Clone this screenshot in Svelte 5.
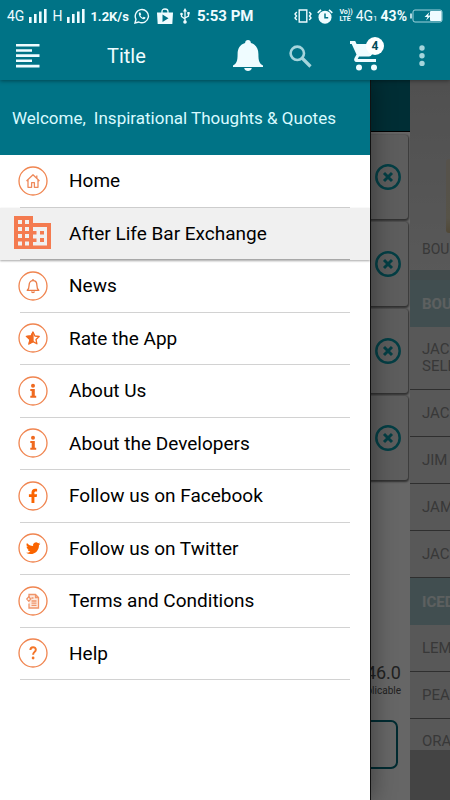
<script>
  const items = [
    { label: 'Home', icon: 'home' },
    { label: 'After Life Bar Exchange', icon: 'building' },
    { label: 'News', icon: 'bell' },
    { label: 'Rate the App', icon: 'star' },
    { label: 'About Us', icon: 'info' },
    { label: 'About the Developers', icon: 'info' },
    { label: 'Follow us on Facebook', icon: 'facebook' },
    { label: 'Follow us on Twitter', icon: 'twitter' },
    { label: 'Terms and Conditions', icon: 'terms' },
    { label: 'Help', icon: 'help' }
  ];

  const drinks = [
    { name: 'BOURBON', heading: true },
    { name: 'JACK SELECT', tall: true },
    { name: 'JACK' },
    { name: 'JIM' },
    { name: 'JAMESON' },
    { name: 'JACK' },
    { name: 'ICED TEA', heading: true },
    { name: 'LEMON' },
    { name: 'PEACH' },
    { name: 'ORANGE', last: true }
  ];

  const cartRows = [1, 2, 3, 4];

  let selected = $state('After Life Bar Exchange');
  let cartCount = $state(4);
</script>

{#snippet signal()}
  <svg width="18" height="14" viewBox="0 0 18 14" fill="currentColor">
    <rect x="0" y="8" width="2.6" height="6" />
    <rect x="5" y="5" width="2.6" height="9" />
    <rect x="10" y="2.5" width="2.6" height="11.5" />
    <rect x="15" y="0" width="2.6" height="14" />
  </svg>
{/snippet}

{#snippet rowIcon(name)}
  {#if name === 'building'}
    <svg width="38" height="34" viewBox="0 0 38 34">
      <path
        fill="#f47b50"
        fill-rule="evenodd"
        d="M0 0h19v7h18v26H0zM4 4v4h4V4zM11 4v4h4V4zM4 11v4h4v-4zM11 11v4h4v-4zM4 18v4h4v-4zM11 18v4h4v-4zM4 25.500v4h4v-4zM11 25.500v4h4v-4zM19 11v4h3.500v3.500H19v4h3.500V26H19v3.500h14V11zM26 15h4v3.500h-4zM26 22h4v4h-4z"
      />
    </svg>
  {:else}
    <svg width="30" height="30" viewBox="0 0 30 30" fill="none" stroke="#f26b21" stroke-width="1.3">
      <circle cx="15" cy="15" r="14" stroke="#f08550" />
      {#if name === 'home'}
        <path d="M8.500 15L15 8.800l6.500 6.200M10 14v7.300h3.600v-4.600h2.800v4.600H20V14M18.800 12V9.600" stroke="#ee8a5c" stroke-linejoin="round" />
      {:else if name === 'bell'}
        <path d="M9.200 19.300c1.800-1.200 1.900-2.500 1.900-5 0-3 1.700-4.700 3.900-4.700s3.900 1.700 3.900 4.700c0 2.500.1 3.800 1.900 5zM15 9.500V8M13.500 20.500c.4 1.300 2.600 1.300 3 0" stroke="#ea7a45" stroke-linejoin="round" />
      {:else if name === 'star'}
        <path d="M15 9l1.900 4 4.300.5-3.200 3 .9 4.300-3.900-2.200-3.900 2.200.9-4.300-3.200-3 4.300-.5z" stroke-linejoin="round" />
        <path d="M15 9v9.600l-3.900 2.200.9-4.300-3.200-3 4.300-.5z" fill="#f26b21" />
      {:else if name === 'info'}
        <g fill="#ef6a20" stroke="none">
          <circle cx="15" cy="9.800" r="2" />
          <path d="M12.300 13h4.500v6.800h1.400v2h-5.900v-2h1.400V15h-1.400z" />
        </g>
      {:else if name === 'facebook'}
        <path
          fill="#fa6400"
          stroke="none"
          d="M13.500 22v-6h-2.600v-2.700h2.600v-1.800c0-2.500 1.500-3.800 3.700-3.800.9 0 1.600.1 1.900.2v2.500h-1.300c-1.100 0-1.400.6-1.400 1.300v1.600h2.700l-.4 2.700h-2.300v6z"
        />
      {:else if name === 'twitter'}
        <path
          transform="translate(8 8) scale(.6)"
          fill="#fa6400"
          stroke="none"
          d="M23.950 4.570a10 10 0 0 1-2.820.77 4.960 4.960 0 0 0 2.160-2.720c-.95.55-2 .95-3.130 1.180a4.920 4.920 0 0 0-8.380 4.480C7.690 8.100 4.070 6.130 1.640 3.160a4.920 4.920 0 0 0 1.520 6.570 4.900 4.900 0 0 1-2.230-.61v.06c0 2.380 1.690 4.370 3.950 4.820a5 5 0 0 1-2.210.09 4.940 4.940 0 0 0 4.600 3.420A9.870 9.870 0 0 1 0 19.540a14 14 0 0 0 7.550 2.210c9.050 0 14-7.500 14-13.980l-.02-.64a9.900 9.900 0 0 0 2.420-2.560z"
        />
      {:else if name === 'terms'}
        <path d="M11 12V8.500h6.500l3 3v10.500H11v-4.500M17.500 8.500v3h3" stroke="#f0956a" fill="#fdeae0" />
        <path d="M13.500 12h2M13.500 15h5M13.500 17.200h5M13.500 19.400h5M8.800 13l2-2.300 2 2.300-2 2.300z" stroke="#f0956a" />
      {:else if name === 'help'}
        <path d="M12.400 12c0-3.800 5.400-3.700 5.400-.3 0 2.100-2.700 2.300-2.700 5" stroke-width="2" stroke="#f47528" />
        <circle cx="15.100" cy="20" r="1.400" fill="#f47528" stroke="none" />
      {/if}
    </svg>
  {/if}
{/snippet}

<div class="app">
  <header>
    <div class="status-bar">
      <div class="status-group">
        <span class="network">4G</span>
        {@render signal()}
        <span class="network">H</span>
        {@render signal()}
        <strong class="speed">1.2K/s</strong>
        <svg width="16" height="16" viewBox="0 0 16 16" fill="none" stroke="currentColor" stroke-width="1.4">
          <path d="M1 15l1-3.800A6.600 6.600 0 1 1 4.800 14z" />
          <path d="M5.200 4.500c-1.300 1.500.8 6 4.300 6.700 1.200.2 2.200-.8 2-1.600l-1.800-.8-.9 1C7.500 9.300 6.700 8.300 6.400 7.300l.8-.9-.8-1.900z" fill="currentColor" stroke="none" />
        </svg>
        <svg class="store" width="16" height="16" viewBox="0 0 16 16">
          <path d="M5 5V3.500Q5 1 8 1t3 2.500V5" fill="none" stroke="currentColor" stroke-width="1.3" />
          <path d="M0 4.500h16L15.300 16H.7z" fill="currentColor" />
          <path d="M5.500 6.500l6 3.700-6 3.800z" fill="#007386" />
        </svg>
        <svg class="usb" width="10" height="16" viewBox="0 0 10 16" fill="none" stroke="currentColor" stroke-width="1.3">
          <path d="M5 2.500v11M1.500 6v2.500L5 11M8.500 5.500V8L5 10" />
          <path d="M3 3.500L5 0l2 3.500z" fill="currentColor" stroke="none" />
          <circle cx="5" cy="14" r="1.800" fill="currentColor" stroke="none" />
          <circle cx="1.500" cy="6" r="1.300" fill="currentColor" stroke="none" />
          <path d="M7.300 4h2.400v2.400H7.300z" fill="currentColor" stroke="none" />
        </svg>
        <strong class="clock">5:53 PM</strong>
      </div>
      <div class="status-group right">
        <svg width="18" height="14" viewBox="0 0 18 14" fill="none" stroke="currentColor" stroke-width="1.4">
          <path d="M5.200 1h7.600v12H5.200zM2.800 3L1 5l1.500 2L1 9l1.800 2M15.200 3L17 5l-1.500 2L17 9l-1.800 2" />
        </svg>
        <svg class="alarm" width="16" height="15" viewBox="0 0 16 15">
          <circle cx="8" cy="8.200" r="6.500" fill="currentColor" />
          <path d="M.7 3.800L4 .8M15.300 3.800L12 .8" stroke="currentColor" stroke-width="1.6" />
          <path d="M8 4.500v4.300h3.200" fill="none" stroke="#007386" stroke-width="1.5" />
        </svg>
        <span class="volte"><b>Vo))</b><b>LTE</b></span>
        <span class="network">4G<small>1</small></span>
        <strong class="percent">43%</strong>
        <svg class="battery" width="33" height="14" viewBox="0 0 33 14">
          <path d="M1 4.500v5" stroke="currentColor" stroke-width="1.5" />
          <rect x="3" y="1" width="29" height="12" rx="2" fill="none" stroke="#9fd3dc" />
          <rect x="20" y="2" width="11.5" height="10" rx="1" fill="currentColor" />
          <path d="M19.500 3l-5 5h3l-1.500 3.500 5-5h-3z" fill="currentColor" />
        </svg>
      </div>
    </div>

    <div class="app-bar">
      <button class="menu" aria-label="Menu">
        <svg width="24" height="24" viewBox="0 0 24 24" fill="currentColor">
          <path d="M0 0h23.500v2.600H0zM0 5.300h16v2.400H0zM0 10.300h23.500v2.600H0zM0 15.500h16v2.400H0zM0 20.800h23.500v2.600H0z" />
        </svg>
      </button>
      <h1>Title</h1>
      <button class="alerts" aria-label="Notifications">
        <svg width="30" height="32" viewBox="0 0 30 32" fill="currentColor">
          <path d="M15 0c1.700 0 2.900 1.200 2.900 3 5.100 1.500 7.500 5.600 7.500 11 0 7.500 1.200 9.700 4.600 11.400V27H0v-1.600C3.400 23.700 4.600 21.500 4.600 14c0-5.400 2.400-9.500 7.500-11 0-1.800 1.200-3 2.900-3z" />
          <path d="M11.200 28h7.600c-.5 4-7.100 4-7.600 0z" />
        </svg>
      </button>
      <button class="search" aria-label="Search">
        <svg width="23" height="23" viewBox="0 0 23 23" fill="none" stroke="#a5d5dc">
          <circle cx="8.300" cy="8.300" r="6.700" stroke-width="2.6" />
          <path d="M13 13l8.500 8.500" stroke-width="3.2" />
        </svg>
      </button>
      <button class="cart" aria-label="Cart">
        <svg width="30" height="30" viewBox="0 0 30 30">
          <g fill="currentColor">
            <path d="M0 0h5.200l1.400 3H27l-5 10.500q-1 2-3 2H9l-1.300 2.600H26v3H6.500c-2 0-3-2-2-4l2-3.700L1.700 3H0z" />
            <circle cx="9" cy="26.500" r="3" />
            <circle cx="24" cy="26.500" r="3" />
          </g>
        </svg>
        <span class="badge">{cartCount}</span>
      </button>
      <button class="more" aria-label="More options">
        <svg width="6" height="22" viewBox="0 0 6 22" fill="#a5d5dc">
          <circle cx="3" cy="3" r="2.700" />
          <circle cx="3" cy="10.700" r="2.700" />
          <circle cx="3" cy="18.400" r="2.700" />
        </svg>
      </button>
    </div>
  </header>

  <main>
    <section class="order">
      <div class="order-head"></div>
      {#each cartRows as row (row)}
        <div class="order-card">
          <button aria-label="Remove item {row}">
            <svg width="26" height="26" viewBox="0 0 26 26" fill="none" stroke="#0a9cab">
              <circle cx="13" cy="13" r="11.700" stroke-width="2.500" />
              <path d="M9 9l8 8M17 9l-8 8" stroke-width="3" />
            </svg>
          </button>
        </div>
      {/each}
      <div class="total">
        <span class="amount">46.0</span>
        <span class="note">applicable</span>
      </div>
      <button class="checkout" aria-label="Checkout"></button>
    </section>

    <section class="catalog">
      <div class="photo">
        <span class="glass"></span>
        <span class="caption">BOURBON</span>
      </div>
      <ul>
        {#each drinks as drink}
          <li class:heading={drink.heading} class:tall={drink.tall} class:last={drink.last}>{drink.name}</li>
        {/each}
      </ul>
    </section>

    <div class="scrim"></div>

    <nav class="drawer">
      <p class="welcome"><span>Welcome,</span> <span>Inspirational Thoughts &amp; Quotes</span></p>
      <ul>
        {#each items as item (item.label)}
          <li class:selected={selected === item.label}>
            <button onclick={() => (selected = item.label)}>
              <span class="icon">{@render rowIcon(item.icon)}</span>
              {item.label}
            </button>
          </li>
        {/each}
      </ul>
    </nav>
  </main>
</div>

<style>
  :global(body) {
    margin: 0;
    background: #fff;
  }

  .app {
    display: flex;
    flex-direction: column;
    min-height: 100vh;
    overflow: hidden;
    font-family: Roboto, "Liberation Sans", sans-serif;
  }

  button {
    padding: 0;
    border: 0;
    background: none;
    color: inherit;
    font: inherit;
    cursor: pointer;
  }

  svg {
    display: block;
    flex: none;
  }

  ul {
    margin: 0;
    padding: 0;
    list-style: none;
  }

  header {
    position: relative;
    z-index: 2;
    background: #007386;
    color: #effcff;
    box-shadow: 0 1px 4px rgba(0, 0, 0, 0.4);
  }

  .status-bar {
    display: flex;
    justify-content: space-between;
    align-items: center;
    height: 32px;
    padding: 0 7px;
    white-space: nowrap;
  }

  .status-group {
    display: flex;
    align-items: center;
    gap: 5px;
  }

  .status-group.right {
    gap: 3px;
  }

  .network {
    font-size: 14px;
    font-weight: 400;
  }

  .network small {
    font-size: 8px;
  }

  .speed {
    font-size: 13px;
    font-weight: 700;
  }

  .store,
  .usb {
    margin-left: 2px;
  }

  .clock {
    margin-left: 2px;
    font-size: 15px;
    font-weight: 700;
  }

  .alarm {
    margin: 0 3px 0 2px;
  }

  .volte {
    display: flex;
    flex-direction: column;
    font-size: 7px;
    line-height: 7px;
  }

  .percent {
    font-size: 14px;
    font-weight: 700;
  }

  .app-bar {
    display: flex;
    align-items: center;
    height: 48px;
    padding: 0 25px 0 16px;
  }

  h1 {
    flex: 1;
    margin: 0 0 0 67px;
    font-size: 20px;
    font-weight: 400;
  }

  .alerts {
    margin-right: 26px;
  }

  .search {
    margin-right: 38px;
  }

  .cart {
    position: relative;
    margin-right: 39px;
  }

  .badge {
    position: absolute;
    top: -4px;
    right: -4px;
    width: 18px;
    height: 18px;
    border-radius: 50%;
    background: #fff;
    color: #004a58;
    font-size: 12px;
    font-weight: 700;
    line-height: 18px;
  }

  main {
    position: relative;
    display: flex;
    flex: 1;
  }

  .order {
    display: flex;
    flex: 1;
    flex-direction: column;
    align-items: stretch;
    background: #fff;
  }

  .order-head {
    height: 52px;
    margin-bottom: 3px;
    background: #007386;
    border-bottom: 1px solid #000;
    box-sizing: border-box;
  }

  .order-card {
    display: flex;
    justify-content: flex-end;
    align-items: center;
    height: 84px;
    margin: 0 2px 3px 8px;
    padding-right: 7px;
    border-radius: 3px;
    background: #e9e9e9;
    box-shadow: 0 1px 2px 1px #777;
    box-sizing: border-box;
  }

  .total {
    display: flex;
    flex-direction: column;
    align-items: flex-end;
    margin-top: 180px;
    padding-right: 9px;
    color: #555;
  }

  .amount {
    font-size: 18px;
    line-height: 20px;
  }

  .note {
    font-size: 10px;
    line-height: 16px;
  }

  .checkout {
    height: 49px;
    margin: 21px 12px 30px;
    border: 2px solid #006c7a;
    border-radius: 7px;
  }

  .catalog {
    display: flex;
    flex-direction: column;
    width: 40px;
    overflow: hidden;
    background: #aaa;
    color: #8c8c8c;
    font-size: 15px;
    white-space: nowrap;
  }

  .photo {
    display: flex;
    flex-direction: column;
    justify-content: flex-end;
    height: 200px;
    padding-left: 12px;
    border-bottom: 10px solid #a6bcbd;
    background: linear-gradient(#c8c8c8, #d8d8d8 75%, #dedede);
    box-sizing: border-box;
  }

  .glass {
    width: 12px;
    height: 74px;
    margin-left: 24px;
    border-radius: 3px;
    background: linear-gradient(#d6cdbc, #d9cfb4 80%, #c9b48a);
  }

  .caption {
    margin: 7px 0 12px;
    font-size: 14px;
    line-height: 18px;
  }

  .catalog li {
    display: flex;
    align-items: center;
    height: 47px;
    padding-left: 12px;
    border-bottom: 1px solid #777;
    background: #dcdcdc;
    box-sizing: border-box;
  }

  .catalog li.heading {
    border-bottom: 0;
    background: #a4c4c7;
    color: #e8f0f0;
    font-weight: 700;
  }

  .catalog li.tall {
    height: 63px;
    line-height: 17px;
    white-space: normal;
  }

  .catalog li.last {
    align-items: flex-end;
    height: 31px;
    border-bottom: 0;
  }

  .scrim {
    position: absolute;
    inset: 0;
    background: rgba(0, 0, 0, 0.6);
  }

  .drawer {
    position: absolute;
    top: 0;
    bottom: 0;
    left: 0;
    right: 80px;
    background: #fff;
    color: #000;
    box-shadow: 1px 0 0 #111, 2px 0 22px rgba(0, 0, 0, 0.4);
  }

  .welcome {
    display: flex;
    gap: 8px;
    align-items: center;
    height: 75px;
    margin: 0;
    padding-left: 12px;
    background: #007386;
    color: #d8faff;
    font-size: 17px;
    white-space: nowrap;
  }

  .drawer ul {
    display: grid;
    grid-auto-rows: 1fr;
    height: 525px;
  }

  .drawer li {
    display: flex;
    padding: 0 20px;
  }

  .drawer li button {
    display: flex;
    flex: 1;
    align-items: center;
    gap: 23px;
    border-bottom: 1px solid #d2d2d2;
    font-size: 19px;
    text-align: left;
  }

  .drawer li.selected {
    background: #f0f0f0;
    box-shadow: 0 1px 2px rgba(0, 0, 0, 0.35);
  }

  .drawer li.selected button {
    border-color: #a8a8a8;
  }

  .icon {
    display: flex;
    justify-content: center;
    width: 26px;
  }
</style>
